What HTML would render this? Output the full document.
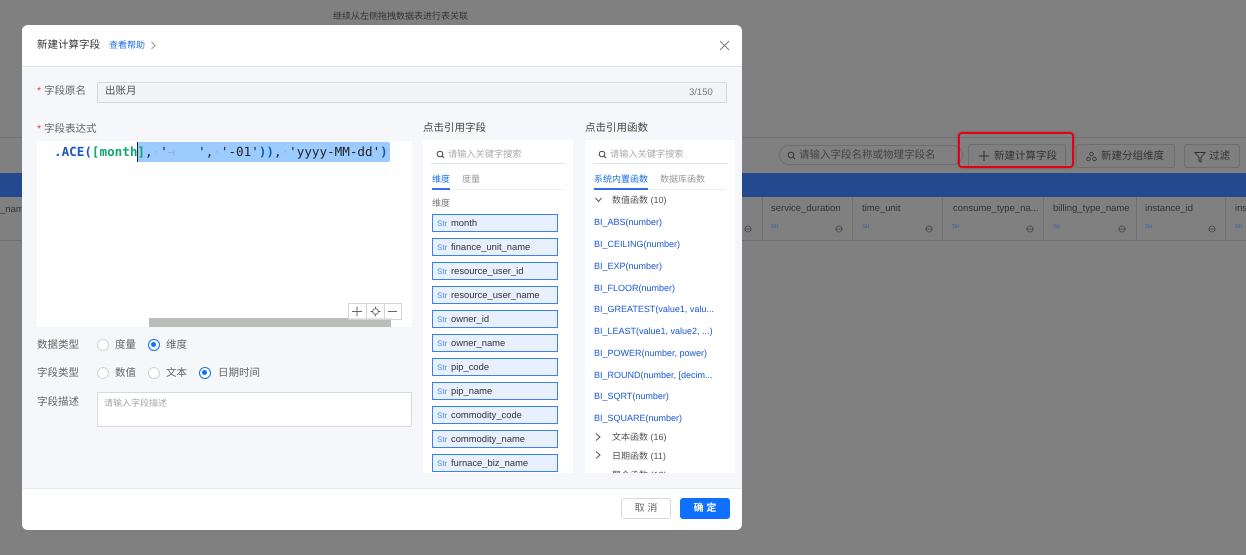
<!DOCTYPE html>
<html><head><meta charset="utf-8">
<style>
*{box-sizing:border-box}
html,body{margin:0;padding:0}
html{background:#808080}
body{width:1246px;height:555px;overflow:hidden;position:relative;background:#808080;font-family:"Liberation Sans","Noto Sans CJK SC",sans-serif;color:#555;text-rendering:geometricPrecision}
#w{position:absolute;left:0;top:0;width:1246px;height:555px;filter:blur(.25px)}
.a{position:absolute;white-space:nowrap}
.lb{font-size:10.5px;color:#666;line-height:14px}
.star{color:#e5484d}
.item{position:absolute;left:432px;width:126px;height:18px;background:#e8f0fe;border:1px solid #3b82f0;font-size:9.4px;color:#333;line-height:16px;padding-left:18px}
.item i{position:absolute;left:4px;top:1px;font-style:normal;font-size:8px;color:#4a8cf0}
.fn{position:absolute;left:594px;font-size:9px;color:#1a56d6;line-height:12px;white-space:nowrap}
.radio{position:absolute;width:12px;height:12px;border-radius:50%;border:1px solid #d5d5d8;background:#fff}
.radio.on{border:1.5px solid #0f6fff}
.radio.on:after{content:"";position:absolute;left:2px;top:2px;width:5px;height:5px;border-radius:50%;background:#0f6fff}
.th{position:absolute;top:203px;font-size:9.5px;color:#333;white-space:nowrap;line-height:12px}
.str{position:absolute;top:223px;font-size:6px;color:#3a5f9f;line-height:8px}
.vl{position:absolute;top:197px;width:1px;height:43px;background:#707070}
.btn{position:absolute;top:144px;height:24px;border:1px solid #6e6e6e;border-radius:3px;background:#7f7f7f;font-size:10.5px;color:#333;line-height:22px;white-space:nowrap}
.mono{font-family:"DejaVu Sans Mono",monospace;font-size:12.6px;line-height:20px;white-space:pre}
.mono b{color:#1a56c4}
.mono b.g{color:#12a56f}
.mono u{text-decoration:none;color:#8fb4dc}
</style></head><body><div id="w">
<div class="a" style="left:333px;top:10px;font-size:9px;color:#333;line-height:12px">继续从左侧拖拽数据表进行表关联</div>
<div class="a" style="left:0;top:137px;width:1246px;height:1px;background:#737373"></div>
<div class="a" style="left:0;top:173px;width:1246px;height:24px;background:#234a8e"></div>
<div class="a" style="left:0;top:240px;width:1246px;height:1px;background:#707070"></div>

<div class="a" style="left:0;top:204px;font-size:9.5px;color:#333;line-height:12px">_name</div>
<div class="vl" style="left:762px"></div><div class="vl" style="left:852px"></div><div class="vl" style="left:942px"></div><div class="vl" style="left:1043px"></div><div class="vl" style="left:1136px"></div><div class="vl" style="left:1225px"></div>
<div class="th" style="left:771px">service_duration</div>
<div class="th" style="left:862px">time_unit</div>
<div class="th" style="left:953px">consume_type_na...</div>
<div class="th" style="left:1053px">billing_type_name</div>
<div class="th" style="left:1145px">instance_id</div>
<div class="th" style="left:1235px">ins</div>
<div class="str" style="left:771px">Str</div><div class="str" style="left:862px">Str</div><div class="str" style="left:952px">Str</div><div class="str" style="left:1053px">Str</div><div class="str" style="left:1145px">Str</div><div class="str" style="left:1235px">Str</div>
<svg class="a" style="left:0;top:222px" width="1246" height="12" fill="none" stroke="#444" stroke-width=".7">
<circle cx="748" cy="7" r="3"/><circle cx="839" cy="7" r="3"/><circle cx="929" cy="7" r="3"/><circle cx="1030" cy="7" r="3"/><circle cx="1122" cy="7" r="3"/><circle cx="1212" cy="7" r="3"/>
<path d="M744 7h8M835 7h8M925 7h8M1026 7h8M1118 7h8M1208 7h8"/></svg>

<div class="a" style="left:779px;top:145px;width:184px;height:20px;border:1px solid #6e6e6e;border-radius:10px;font-size:10.5px;color:#444;line-height:18px;padding-left:19px">请输入字段名称或物理字段名</div>
<svg class="a" style="left:787px;top:151px" width="9" height="9" fill="none" stroke="#333"><circle cx="4" cy="4" r="2.8"/><path d="M6 6l2 2"/></svg>
<div class="btn" style="left:968px;width:98px;padding-left:25px">新建计算字段</div>
<svg class="a" style="left:978px;top:150px" width="12" height="12" stroke="#333"><path d="M6 1v10M1 6h10"/></svg>
<div class="btn" style="left:1076px;width:99px;padding-left:24px">新建分组维度</div>
<svg class="a" style="left:1086px;top:151px" width="11" height="11" fill="none" stroke="#333" stroke-width=".8"><circle cx="5.5" cy="3" r="1.8"/><circle cx="2.5" cy="8" r="1.8"/><circle cx="8.5" cy="8" r="1.8"/></svg>
<div class="btn" style="left:1184px;width:56px;padding-left:24px">过滤</div>
<svg class="a" style="left:1194px;top:151px" width="12" height="12" fill="none" stroke="#333"><path d="M1 1.5h10L7 6.5v4.5L5 10V6.5z"/></svg>
<div class="a" style="left:958px;top:132px;width:116px;height:36px;border:2.5px solid #e3001b;border-radius:4px;box-shadow:0 0 2px rgba(120,0,0,.5)"></div>

<!-- modal -->
<div class="a" style="left:22px;top:25px;width:720px;height:505px;background:#f6f7fa;border-radius:6px;overflow:hidden">
<div style="position:absolute;left:0;top:0;width:720px;height:42px;background:#fff;border-bottom:1px solid #e2e2e4"></div>
<div style="position:absolute;left:0;bottom:0;width:720px;height:42px;background:#fff;border-top:1px solid #e8e8ea"></div>
</div>
<div class="a" style="left:37px;top:38px;font-size:10.5px;color:#333;line-height:15px">新建计算字段</div>
<div class="a" style="left:109px;top:38px;font-size:9px;color:#1a6fe8;line-height:14px">查看帮助</div>
<svg class="a" style="left:150px;top:41px" width="7" height="9" fill="none" stroke="#777" stroke-width=".8"><path d="M1.5 1l3.5 3.5L1.5 8"/></svg>
<svg class="a" style="left:719px;top:40px" width="11" height="11" fill="none" stroke="#777" stroke-width=".9"><path d="M1 1l9 9M10 1l-9 9"/></svg>

<div class="a lb" style="left:37px;top:84px"><span class="star">*</span> 字段原名</div>
<div class="a" style="left:97px;top:82px;width:630px;height:21px;background:#f3f4f6;border:1px solid #d9d9db;border-radius:1px"></div>
<div class="a" style="left:105px;top:84px;font-size:10.5px;color:#555;line-height:15px">出账月</div>
<div class="a" style="left:689px;top:87px;font-size:9.5px;color:#777;line-height:12px">3/150</div>

<div class="a lb" style="left:37px;top:122px"><span class="star">*</span> 字段表达式</div>
<div class="a" style="left:37px;top:141px;width:375px;height:186px;background:#fff"></div>
<div class="a" style="left:137px;top:142px;width:253px;height:20px;background:#9ccbff;border-radius:2px"></div>
<div class="a mono" style="left:54px;top:142px;color:#222"><b>.ACE(</b><b class="g">[month]</b>,<u>·</u>'<u>→</u>   ',<u>·</u>'-01'<b>))</b>,<u>·</u>'yyyy-MM-dd'<b>)</b></div>
<div class="a" style="left:137px;top:142px;width:1px;height:20px;background:#223"></div>
<div class="a" style="left:149px;top:318px;width:242px;height:9px;background:#bcbcb9"></div>
<div class="a" style="left:348px;top:303px;width:54px;height:17px;border:1px solid #d5d5d5;background:rgba(255,255,255,.6)"></div>
<div class="a" style="left:366px;top:303px;width:1px;height:17px;background:#d5d5d5"></div>
<div class="a" style="left:384px;top:303px;width:1px;height:17px;background:#d5d5d5"></div>
<svg class="a" style="left:348px;top:303px" width="54" height="17" fill="none" stroke="#666" stroke-width=".9"><path d="M4 8.5h10M9 3.5v10M40 8.5h9"/><circle cx="27.5" cy="8.5" r="2.8"/><path d="M27.5 3.5v2M27.5 11.5v2M22.5 8.5h2M30.5 8.5h2"/></svg>

<div class="a lb" style="left:37px;top:338px">数据类型</div>
<div class="radio" style="left:97px;top:339px"></div><div class="a lb" style="left:115px;top:338px">度量</div>
<div class="radio on" style="left:148px;top:339px"></div><div class="a lb" style="left:166px;top:338px">维度</div>
<div class="a lb" style="left:37px;top:366px">字段类型</div>
<div class="radio" style="left:97px;top:367px"></div><div class="a lb" style="left:115px;top:366px">数值</div>
<div class="radio" style="left:148px;top:367px"></div><div class="a lb" style="left:166px;top:366px">文本</div>
<div class="radio on" style="left:199px;top:367px"></div><div class="a lb" style="left:218px;top:366px">日期时间</div>
<div class="a lb" style="left:37px;top:395px">字段描述</div>
<div class="a" style="left:97px;top:392px;width:315px;height:35px;background:#fff;border:1px solid #d9d9db;border-radius:1px;font-size:9px;color:#aaa;padding:4px 6px;line-height:12px">请输入字段描述</div>

<!-- fields -->
<div class="a" style="left:423px;top:121px;font-size:10.5px;color:#444;line-height:15px">点击引用字段</div>
<div class="a" style="left:423px;top:140px;width:150px;height:333px;background:#fff"></div>
<div class="a" style="left:431px;top:163px;width:134px;height:1px;background:#e2e2e4"></div>
<svg class="a" style="left:436px;top:150px" width="9" height="9" fill="none" stroke="#444"><circle cx="4" cy="4" r="2.8"/><path d="M6 6l2 2"/></svg>
<div class="a" style="left:448px;top:148px;font-size:9.2px;color:#aaa;line-height:12px">请输入关键字搜索</div>
<div class="a" style="left:432px;top:173px;font-size:9px;color:#1a6fe8;line-height:12px">维度</div>
<div class="a" style="left:462px;top:173px;font-size:9px;color:#999;line-height:12px">度量</div>
<div class="a" style="left:431px;top:189px;width:134px;height:1px;background:#eee"></div>
<div class="a" style="left:432px;top:188px;width:18px;height:2px;background:#3a6cf0"></div>
<div class="a" style="left:432px;top:197px;font-size:9px;color:#777;line-height:12px">维度</div>
<div class="item" style="top:214px"><i>Str</i>month</div>
<div class="item" style="top:238px"><i>Str</i>finance_unit_name</div>
<div class="item" style="top:262px"><i>Str</i>resource_user_id</div>
<div class="item" style="top:286px"><i>Str</i>resource_user_name</div>
<div class="item" style="top:310px"><i>Str</i>owner_id</div>
<div class="item" style="top:334px"><i>Str</i>owner_name</div>
<div class="item" style="top:358px"><i>Str</i>pip_code</div>
<div class="item" style="top:382px"><i>Str</i>pip_name</div>
<div class="item" style="top:406px"><i>Str</i>commodity_code</div>
<div class="item" style="top:430px"><i>Str</i>commodity_name</div>
<div class="item" style="top:454px"><i>Str</i>furnace_biz_name</div>

<!-- functions -->
<div class="a" style="left:585px;top:121px;font-size:10.5px;color:#444;line-height:15px">点击引用函数</div>
<div class="a" style="left:585px;top:140px;width:150px;height:333px;background:#fff"></div>
<div class="a" style="left:593px;top:163px;width:135px;height:1px;background:#e2e2e4"></div>
<svg class="a" style="left:598px;top:150px" width="9" height="9" fill="none" stroke="#444"><circle cx="4" cy="4" r="2.8"/><path d="M6 6l2 2"/></svg>
<div class="a" style="left:610px;top:148px;font-size:9.2px;color:#aaa;line-height:12px">请输入关键字搜索</div>
<div class="a" style="left:594px;top:173px;font-size:9px;color:#1a6fe8;line-height:12px">系统内置函数</div>
<div class="a" style="left:660px;top:173px;font-size:9px;color:#999;line-height:12px">数据库函数</div>
<div class="a" style="left:593px;top:189px;width:133px;height:1px;background:#eee"></div>
<div class="a" style="left:594px;top:188px;width:54px;height:2px;background:#2f6cf0"></div>
<svg class="a" style="left:595px;top:196px" width="8" height="8" fill="none" stroke="#555"><path d="M.5 2l3 3.5 3-3.5"/></svg>
<div class="a" style="left:612px;top:194px;font-size:9px;color:#555;line-height:12px">数值函数 (10)</div>
<div class="fn" style="top:216px">BI_ABS(number)</div>
<div class="fn" style="top:238px">BI_CEILING(number)</div>
<div class="fn" style="top:260px">BI_EXP(number)</div>
<div class="fn" style="top:282px">BI_FLOOR(number)</div>
<div class="fn" style="top:303px">BI_GREATEST(value1, valu...</div>
<div class="fn" style="top:325px">BI_LEAST(value1, value2, ...)</div>
<div class="fn" style="top:347px">BI_POWER(number, power)</div>
<div class="fn" style="top:369px">BI_ROUND(number, [decim...</div>
<div class="fn" style="top:390px">BI_SQRT(number)</div>
<div class="fn" style="top:412px">BI_SQUARE(number)</div>
<svg class="a" style="left:595px;top:433px" width="8" height="8" fill="none" stroke="#555"><path d="M1 .5l4 3.5-4 3.5"/></svg>
<div class="a" style="left:612px;top:431px;font-size:9px;color:#555;line-height:12px">文本函数 (16)</div>
<svg class="a" style="left:595px;top:451px" width="8" height="8" fill="none" stroke="#555"><path d="M1 .5l4 3.5-4 3.5"/></svg>
<div class="a" style="left:612px;top:450px;font-size:9px;color:#555;line-height:12px">日期函数 (11)</div>
<div class="a" style="left:612px;top:469px;height:4px;overflow:hidden;font-size:9px;color:#555;line-height:12px">聚合函数 (13)</div>

<div class="a" style="left:621px;top:498px;width:50px;height:21px;background:#fff;border:1px solid #d9d9db;border-radius:3px;text-align:center;font-size:10px;line-height:20px;color:#666">取 消</div>
<div class="a" style="left:680px;top:498px;width:50px;height:21px;background:#0f6fff;border-radius:3px;text-align:center;font-size:10px;font-weight:bold;line-height:22px;color:#fff">确 定</div>
</div></body></html>
